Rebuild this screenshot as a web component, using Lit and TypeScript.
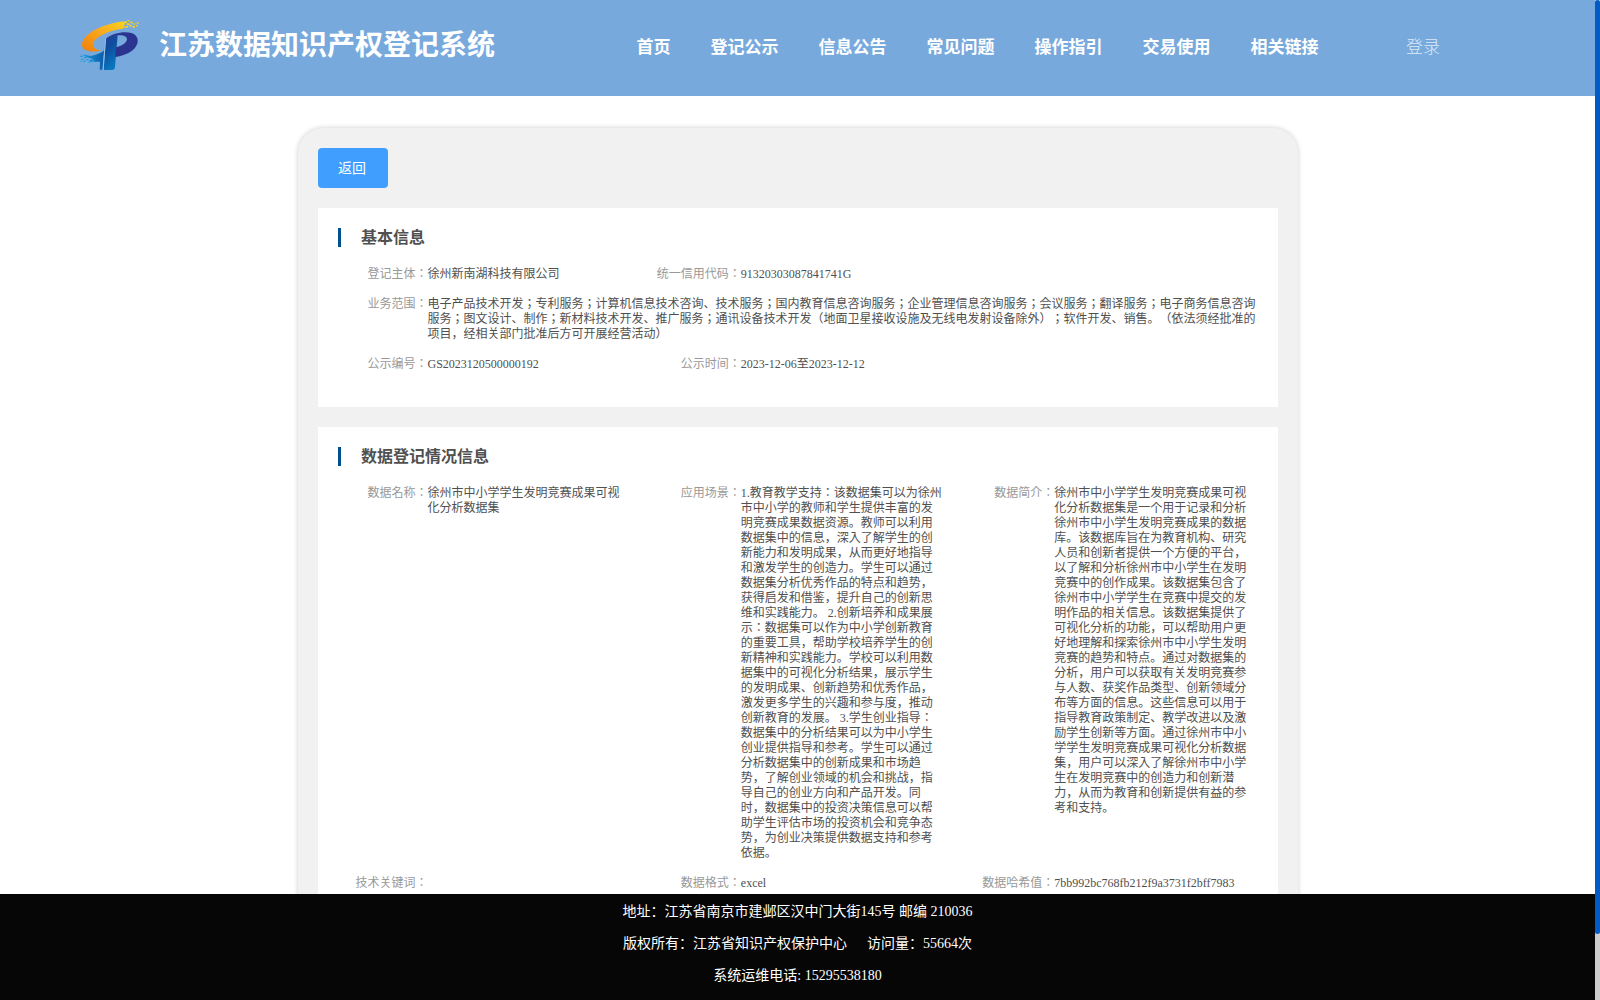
import { LitElement, html, css } from "lit";
import { customElement, property } from "lit/decorators.js";

interface Field {
  label: string;
  value: string;
  wide?: boolean;
}

const NAV = ["首页", "登记公示", "信息公告", "常见问题", "操作指引", "交易使用", "相关链接"];

const BASIC: Field[][] = [
  [
    { label: "登记主体", value: "徐州新南湖科技有限公司" },
    { label: "统一信用代码", value: "91320303087841741G" },
  ],
  [
    {
      label: "业务范围",
      wide: true,
      value:
        "电子产品技术开发；专利服务；计算机信息技术咨询、技术服务；国内教育信息咨询服务；企业管理信息咨询服务；会议服务；翻译服务；电子商务信息咨询服务；图文设计、制作；新材料技术开发、推广服务；通讯设备技术开发（地面卫星接收设施及无线电发射设备除外）；软件开发、销售。（依法须经批准的项目，经相关部门批准后方可开展经营活动）",
    },
  ],
  [
    { label: "公示编号", value: "GS2023120500000192" },
    { label: "公示时间", value: "2023-12-06至2023-12-12" },
  ],
];

const DATA: Field[][] = [
  [
    { label: "数据名称", value: "徐州市中小学学生发明竞赛成果可视化分析数据集" },
    {
      label: "应用场景",
      value:
        "1.教育教学支持：该数据集可以为徐州市中小学的教师和学生提供丰富的发明竞赛成果数据资源。教师可以利用数据集中的信息，深入了解学生的创新能力和发明成果，从而更好地指导和激发学生的创造力。学生可以通过数据集分析优秀作品的特点和趋势，获得启发和借鉴，提升自己的创新思维和实践能力。 2.创新培养和成果展示：数据集可以作为中小学创新教育的重要工具，帮助学校培养学生的创新精神和实践能力。学校可以利用数据集中的可视化分析结果，展示学生的发明成果、创新趋势和优秀作品，激发更多学生的兴趣和参与度，推动创新教育的发展。 3.学生创业指导：数据集中的分析结果可以为中小学生创业提供指导和参考。学生可以通过分析数据集中的创新成果和市场趋势，了解创业领域的机会和挑战，指导自己的创业方向和产品开发。同时，数据集中的投资决策信息可以帮助学生评估市场的投资机会和竞争态势，为创业决策提供数据支持和参考依据。",
    },
    {
      label: "数据简介",
      value:
        "徐州市中小学学生发明竞赛成果可视化分析数据集是一个用于记录和分析徐州市中小学生发明竞赛成果的数据库。该数据库旨在为教育机构、研究人员和创新者提供一个方便的平台，以了解和分析徐州市中小学生在发明竞赛中的创作成果。该数据集包含了徐州市中小学学生在竞赛中提交的发明作品的相关信息。该数据集提供了可视化分析的功能，可以帮助用户更好地理解和探索徐州市中小学生发明竞赛的趋势和特点。通过对数据集的分析，用户可以获取有关发明竞赛参与人数、获奖作品类型、创新领域分布等方面的信息。这些信息可以用于指导教育政策制定、教学改进以及激励学生创新等方面。通过徐州市中小学学生发明竞赛成果可视化分析数据集，用户可以深入了解徐州市中小学生在发明竞赛中的创造力和创新潜力，从而为教育和创新提供有益的参考和支持。",
    },
  ],
  [
    { label: "技术关键词", value: "" },
    { label: "数据格式", value: "excel" },
    { label: "数据哈希值", value: "7bb992bc768fb212f9a3731f2bff7983" },
  ],
];

@customElement("brand-logo")
export class BrandLogo extends LitElement {
  static styles = css`
    :host { display: block; width: 80px; height: 70px; }
    .art { display: block; width: 80px; height: 70px; }
  `;
  render() {
    return html`<svg class="art" viewBox="0 0 240 210" aria-hidden="true">
      <defs>
        <linearGradient id="gold" x1="0" y1="1" x2="1" y2="0">
          <stop offset="0" stop-color="#ef7d0a" />
          <stop offset="0.5" stop-color="#f9a51e" />
          <stop offset="1" stop-color="#fbd41c" />
        </linearGradient>
        <linearGradient id="stem" x1="0" y1="0" x2="0.4" y2="1">
          <stop offset="0" stop-color="#2c3a94" />
          <stop offset="0.45" stop-color="#0c4f9f" />
          <stop offset="1" stop-color="#0a77c0" />
        </linearGradient>
        <linearGradient id="wing" x1="0" y1="0" x2="1" y2="0">
          <stop offset="0" stop-color="#1a9adb" />
          <stop offset="1" stop-color="#0b5aa8" />
        </linearGradient>
      </defs>
      <path fill="url(#stem)" d="M108 86C118 80 128 77 143 75L135 172Q134 180 126 180H101Z" />
      <path fill="#2b3590" d="M108 86C130 68 165 63 187 70C211 80 206 107 188 121C172 133 154 139 135 141L138 112C154 109 170 99 171 88C171 77 156 74 142 76C128 78 118 81 108 86Z" />
      <path fill="url(#wing)" d="M36 133L62 138C80 134 91 129 101 123L105 88L98 179H89L90 155H66L57 150L72 148L50 142Z" />
      <path stroke="#a5c9ea" stroke-width="2.5" d="M106.5 87L99 180" />
      <path fill="url(#gold)" d="M93 123C62 127 41 123 36 108C33 82 75 45 162 34L166 42L161 47L166 51L158 56C120 60 74 80 69 101C68 113 80 119 93 122Z" />
      <g fill="#fbd41c">
        <rect x="164" y="34" width="7" height="5" /><rect x="173" y="30" width="6" height="4" />
        <rect x="170" y="40" width="8" height="5" /><rect x="181" y="35" width="7" height="5" />
        <rect x="166" y="48" width="8" height="5" /><rect x="178" y="45" width="7" height="5" />
        <rect x="190" y="40" width="6" height="4" /><rect x="188" y="48" width="7" height="5" />
        <rect x="200" y="37" width="6" height="4" /><rect x="198" y="45" width="5" height="4" />
      </g>
      <g fill="#1d9bdc">
        <rect x="31" y="137" width="7" height="4" /><rect x="42" y="141" width="7" height="4" />
        <rect x="34" y="146" width="6" height="4" /><rect x="49" y="147" width="7" height="4" />
        <rect x="40" y="152" width="6" height="4" /><rect x="56" y="154" width="7" height="4" />
        <rect x="31" y="152" width="4" height="3" /><rect x="66" y="150" width="7" height="6" />
      </g>
    </svg>`;
  }
}

@customElement("info-card")
export class InfoCard extends LitElement {
  @property() heading = "";
  @property({ attribute: false }) rows: Field[][] = [];

  /* The fields use the CJK face that centres colons and semicolons in their cell. */
  static styles = css`
    :host { display: block; background: #fff; padding: 20px 0 20px 20px; box-sizing: border-box; }
    .title { display: flex; align-items: center; height: 19px; border-left: 3px solid #00508f; padding-left: 20.5px; margin: 0 0 20px; font-size: 16px; line-height: 19px; font-weight: 700; color: #505050; }
    .row { display: grid; grid-template-columns: repeat(3, 1fr); padding-bottom: 15px; }
    .field { display: grid; grid-template-columns: 90px minmax(0, 1fr); font-family: "Liberation Serif", "Noto Sans CJK JP", serif; font-size: 12px; line-height: 15px; text-spacing-trim: space-all; }
    .wide { grid-column: 1 / -1; }
    .label { color: #999; text-align: right; white-space: nowrap; justify-self: end; }
    .value { color: #505050; padding-right: 20px; min-height: 15px; }
  `;

  render() {
    return html`
      <h2 class="title">${this.heading}</h2>
      ${this.rows.map(
        (row) => html`<div class="row">
          ${row.map(
            (f) => html`<div class="field ${f.wide ? "wide" : ""}">
              <span class="label">${f.label + "："}</span>
              <span class="value">${f.value}</span>
            </div>`
          )}
        </div>`
      )}
    `;
  }
}

@customElement("app-root")
export class AppRoot extends LitElement {
  static styles = css`
    :host { display: grid; grid-template-columns: minmax(0, 1fr) 5px; height: 100vh; overflow: hidden; background: #fff; font-family: "Liberation Serif", "Noto Sans CJK SC", serif; }
    .page { display: flex; flex-direction: column; height: 100vh; min-width: 0; }
    .header { flex: none; display: flex; align-items: center; height: 96px; background: #78a9dd; color: #fff; box-sizing: border-box; padding-left: 70px; white-space: nowrap; }
    .brand { display: flex; align-items: center; width: 566.5px; gap: 9px; padding-bottom: 6px; }
    .name { font-size: 28px; line-height: 36px; font-weight: 700; margin: 0; padding-top: 2px; }
    .nav { display: flex; gap: 40px; font-size: 17px; line-height: 24px; font-weight: 700; }
    .login { margin-left: 87.5px; font-size: 17px; line-height: 24px; font-weight: 300; color: #dce9f7; }
    .content { flex: 1; min-height: 0; overflow: hidden; padding-top: 32px; }
    .panel { width: 1000px; box-sizing: border-box; margin: 0 auto; padding: 20px; border-radius: 25px 25px 0 0; background: #f1f1f1; box-shadow: 0 0 5px rgba(0, 0, 0, 0.2); display: flex; flex-direction: column; gap: 20px; height: 1100px; }
    .back { align-self: flex-start; flex: none; width: 70px; height: 40px; border: 0; border-radius: 4px; padding: 0 1px 3px 0; background: #409eff; color: #fff; font-family: inherit; font-size: 14px; }
    .basic { flex: none; height: 199px; }
    .data { flex: 1; }
    .footer { flex: none; height: 106px; box-sizing: border-box; padding-top: 2px; background: #060606; color: #fff; font-size: 14px; line-height: 32px; text-align: center; }
    .line { display: flex; justify-content: center; gap: 20px; height: 32px; white-space: pre; }
    .track { background: #ccc; }
    .thumb { height: 934px; background: #005bc5; border-radius: 3px; }
  `;

  render() {
    return html`
      <div class="page">
        <header class="header">
          <div class="brand"><brand-logo></brand-logo><h1 class="name">江苏数据知识产权登记系统</h1></div>
          <nav class="nav">${NAV.map((n) => html`<span>${n}</span>`)}</nav>
          <span class="login">登录</span>
        </header>
        <main class="content">
          <div class="panel">
            <button class="back">返回</button>
            <info-card class="basic" heading="基本信息" .rows=${BASIC}></info-card>
            <info-card class="data" heading="数据登记情况信息" .rows=${DATA}></info-card>
          </div>
        </main>
        <footer class="footer">
          <div class="line"><span>地址：江苏省南京市建邺区汉中门大街145号 邮编 210036</span></div>
          <div class="line"><span>版权所有：江苏省知识产权保护中心</span><span>访问量：55664次</span></div>
          <div class="line"><span>系统运维电话: 15295538180</span></div>
        </footer>
      </div>
      <div class="track"><div class="thumb"></div></div>
    `;
  }
}
